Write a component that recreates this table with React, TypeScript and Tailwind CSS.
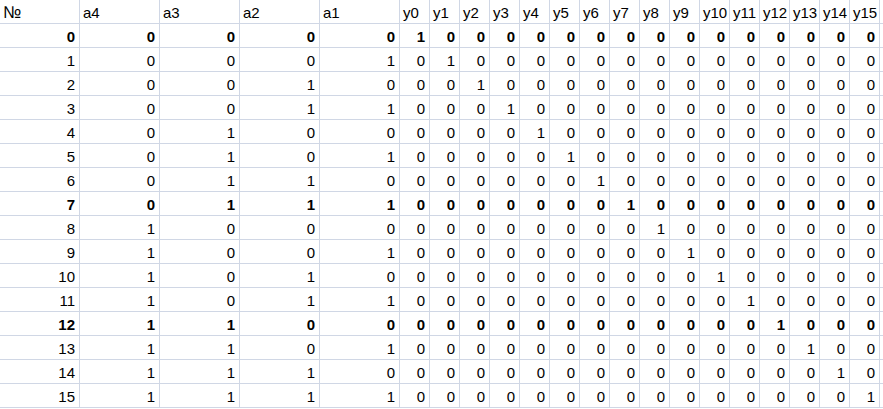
import React from "react";

const aCols = ["a4", "a3", "a2", "a1"];
const yCols = Array.from({ length: 16 }, (_, i) => `y${i}`);
const boldRows = new Set([0, 7, 12]);

function Cell({
  children,
  wide,
  align,
  bold,
}: {
  children?: React.ReactNode;
  wide: boolean;
  align: "left" | "right";
  bold?: boolean;
}) {
  return (
    <div
      className={`${wide ? "w-20" : "w-[30px]"} h-6 shrink-0 border-r border-b border-[#d0d7e5] flex items-end pb-[3px] leading-[15px] whitespace-nowrap ${
        align === "left" ? "justify-start pl-[3px]" : "justify-end pr-[4px]"
      } ${bold ? "font-bold" : ""}`}
    >
      {children}
    </div>
  );
}

export default function App() {
  const rows = Array.from({ length: 16 }, (_, n) => n);
  return (
    <div
      className="w-[883px] h-[409px] overflow-hidden bg-white text-black text-[15px]"
      style={{ fontFamily: '"Liberation Sans", Arial, sans-serif' }}
    >
      <div className="flex">
        <Cell wide align="left">
          <span className="text-[17px] leading-[15px]">№</span>
        </Cell>
        {aCols.map((c) => (
          <Cell key={c} wide align="left">
            {c}
          </Cell>
        ))}
        {yCols.map((c) => (
          <Cell key={c} wide={false} align="left">
            {c}
          </Cell>
        ))}
        <Cell wide align="left" />
      </div>
      {rows.map((n) => {
        const b = boldRows.has(n);
        const bits = [(n >> 3) & 1, (n >> 2) & 1, (n >> 1) & 1, n & 1];
        return (
          <div key={n} className="flex">
            <Cell wide align="right" bold={b}>
              {n}
            </Cell>
            {bits.map((v, i) => (
              <Cell key={i} wide align="right" bold={b}>
                {v}
              </Cell>
            ))}
            {yCols.map((_, i) => (
              <Cell key={i} wide={false} align="right" bold={b}>
                {i === n ? 1 : 0}
              </Cell>
            ))}
            <Cell wide align="right" />
          </div>
        );
      })}
    </div>
  );
}
